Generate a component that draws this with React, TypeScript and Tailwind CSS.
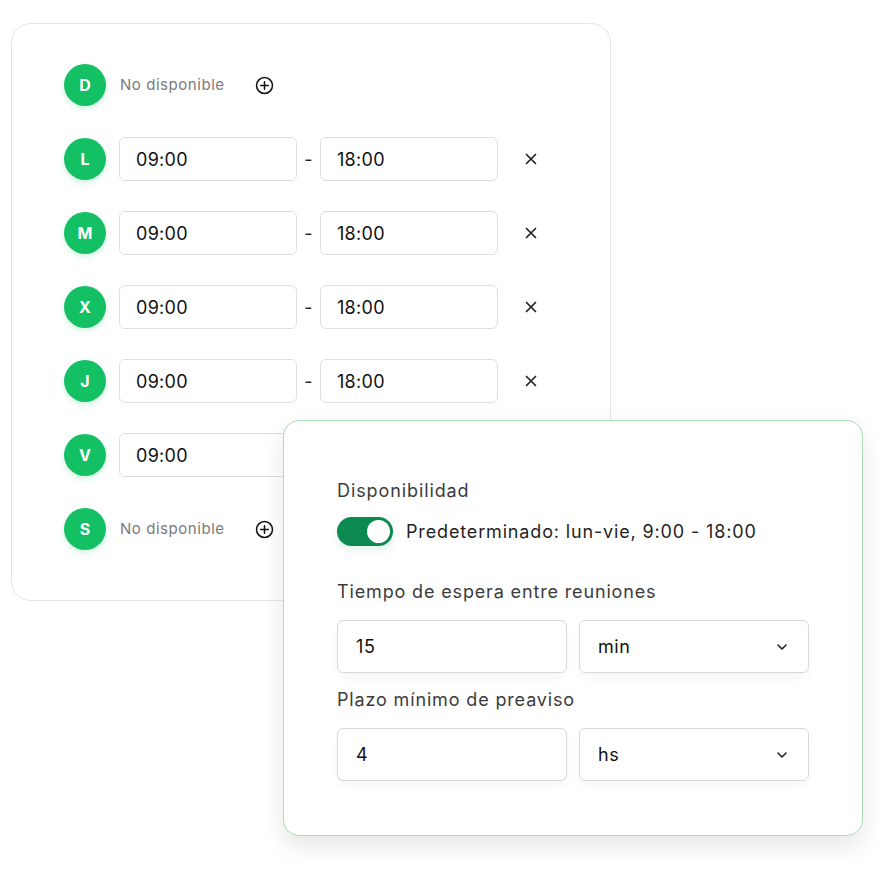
import React from 'react';

const font = { fontFamily: 'Inter, "Noto Sans", sans-serif' };

type Day = { letter: string; from?: string; to?: string };

const days: Day[] = [
  { letter: 'D' },
  { letter: 'L', from: '09:00', to: '18:00' },
  { letter: 'M', from: '09:00', to: '18:00' },
  { letter: 'X', from: '09:00', to: '18:00' },
  { letter: 'J', from: '09:00', to: '18:00' },
  { letter: 'V', from: '09:00', to: '18:00' },
  { letter: 'S' },
];

const PlusIcon = () => (
  <svg width="19" height="19" viewBox="0 0 20 20" fill="none" stroke="#111" strokeWidth="1.6" strokeLinecap="round">
    <circle cx="10" cy="10" r="8.4" />
    <path d="M10 6v8M6 10h8" />
  </svg>
);

const CloseIcon = () => (
  <svg width="12" height="12" viewBox="0 0 12 12" fill="none" stroke="#222" strokeWidth="1.7" strokeLinecap="round">
    <path d="M1.5 1.5l9 9M10.5 1.5l-9 9" />
  </svg>
);

const Chevron = () => (
  <svg width="12" height="8" viewBox="0 0 12 8" fill="none" stroke="#222" strokeWidth="1.6" strokeLinecap="round" strokeLinejoin="round">
    <path d="M2 2l4 4 4-4" />
  </svg>
);

const DayRow: React.FC<{ day: Day }> = ({ day }) => (
  <div className="flex items-center h-[44px]">
    <div className="w-[42px] h-[42px] rounded-full bg-[#14c064] shadow-[0_3px_6px_rgba(20,192,100,0.18)] flex items-center justify-center text-white font-bold text-[16px] shrink-0">
      {day.letter}
    </div>
    {day.from ? (
      <>
        <div className="ml-[13px] w-[178px] h-[44px] rounded-[6px] border border-[#dedede] bg-white flex items-center pl-[16px] text-[18px] tracking-[0.3px] text-[#111]">
          {day.from}
        </div>
        <div className="w-[23px] text-center text-[18px] text-[#222]">-</div>
        <div className="w-[178px] h-[44px] rounded-[6px] border border-[#dedede] bg-white flex items-center pl-[16px] text-[18px] tracking-[0.3px] text-[#111]">
          {day.to}
        </div>
        <div className="ml-[27px] flex items-center">
          <CloseIcon />
        </div>
      </>
    ) : (
      <>
        <span className="ml-[14px] text-[15px] tracking-[0.55px] text-[#7a7a7a] w-[135px]">No disponible</span>
        <PlusIcon />
      </>
    )}
  </div>
);

const Field: React.FC<{ value: string; select?: boolean }> = ({ value, select }) => (
  <div className="h-[53px] rounded-[6px] border border-[#d9d9dd] bg-white shadow-[0_6px_10px_rgba(0,0,0,0.03)] flex items-center justify-between pl-[18px] pr-[20px] text-[18px] tracking-[0.6px] text-[#111]">
    <span>{value}</span>
    {select && <Chevron />}
  </div>
);

export default function App() {
  return (
    <div className="w-[888px] h-[876px] bg-white relative" style={font}>
      <div className="pt-[23px] pl-[11px]">
        <div className="w-[600px] h-[578px] rounded-[20px] border border-[#e4e4e4] bg-white pt-[39px] pl-[52px] flex flex-col gap-[30px]">
          {days.map((d) => (
            <DayRow key={d.letter} day={d} />
          ))}
        </div>
      </div>

      <div className="absolute left-[283px] top-[420px] w-[580px] h-[416px] rounded-[16px] border border-[#acdcb8] bg-white shadow-[0_10px_24px_rgba(0,0,0,0.10)] px-[53px] pt-[56px]">
        <div className="text-[18px] leading-[28px] tracking-[0.9px] text-[#3c3c3c]">Disponibilidad</div>
        <div className="mt-[12px] flex items-center h-[28px]">
          <div className="w-[56px] h-[29px] rounded-full bg-[#0b8a51] flex items-center justify-end pr-[3px] shadow-[0_4px_8px_rgba(11,138,81,0.12)]">
            <div className="w-[23px] h-[23px] rounded-full bg-white" />
          </div>
          <span className="ml-[13px] text-[18px] tracking-[0.85px] text-[#1f1f1f]">Predeterminado: lun-vie, 9:00 - 18:00</span>
        </div>
        <div className="mt-[33px] text-[18px] leading-[28px] tracking-[0.85px] text-[#3c3c3c]">Tiempo de espera entre reuniones</div>
        <div className="mt-[14px] grid grid-cols-2 gap-[12px]">
          <Field value="15" />
          <Field value="min" select />
        </div>
        <div className="mt-[13px] text-[18px] leading-[28px] tracking-[0.85px] text-[#3c3c3c]">Plazo mínimo de preaviso</div>
        <div className="mt-[14px] grid grid-cols-2 gap-[12px]">
          <Field value="4" />
          <Field value="hs" select />
        </div>
      </div>
    </div>
  );
}
